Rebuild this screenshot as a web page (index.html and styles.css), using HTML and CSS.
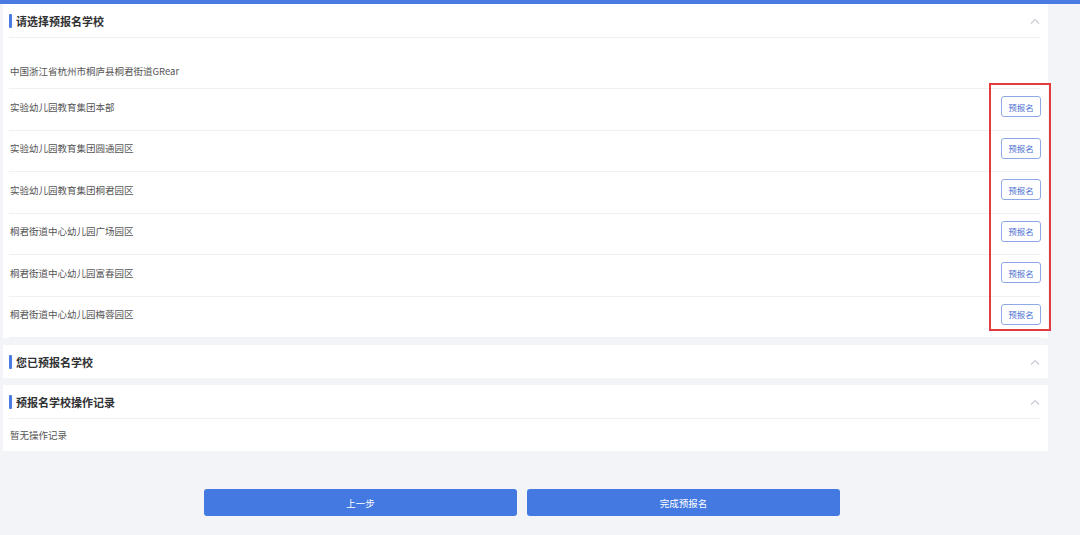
FILE: index.html
```html
<!DOCTYPE html>
<html lang="zh-CN">
<head>
  <meta charset="UTF-8" />
  <meta name="viewport" content="width=device-width, initial-scale=1" />
  <title>预报名</title>
  <link rel="stylesheet" href="styles.css">
</head>
<body>
  <div class="top-bar"></div>

  <div class="page">
    <div class="panel panel-schools">
      <div class="panel-head bordered">
        <h2>请选择预报名学校</h2>
        <svg class="chevron" width="10" height="6" viewBox="0 0 10 6"><polyline points="1,5.5 5,1.5 9,5.5" fill="none" stroke="#c9ccd3" stroke-width="1.2"/></svg>
      </div>

      <div class="address">中国浙江省杭州市桐庐县桐君街道GRear</div>

      <div class="school-row">
        <span>实验幼儿园教育集团本部</span>
        <button class="btn-sign">预报名</button>
      </div>
      <div class="school-row">
        <span>实验幼儿园教育集团圆通园区</span>
        <button class="btn-sign">预报名</button>
      </div>
      <div class="school-row">
        <span>实验幼儿园教育集团桐君园区</span>
        <button class="btn-sign">预报名</button>
      </div>
      <div class="school-row">
        <span>桐君街道中心幼儿园广场园区</span>
        <button class="btn-sign">预报名</button>
      </div>
      <div class="school-row">
        <span>桐君街道中心幼儿园富春园区</span>
        <button class="btn-sign">预报名</button>
      </div>
      <div class="school-row">
        <span>桐君街道中心幼儿园梅蓉园区</span>
        <button class="btn-sign">预报名</button>
      </div>

      <div class="mark-box"></div>
    </div>

    <div class="panel">
      <div class="panel-head">
        <h2>您已预报名学校</h2>
        <svg class="chevron" width="10" height="6" viewBox="0 0 10 6"><polyline points="1,5.5 5,1.5 9,5.5" fill="none" stroke="#c9ccd3" stroke-width="1.2"/></svg>
      </div>
    </div>

    <div class="panel">
      <div class="panel-head bordered">
        <h2>预报名学校操作记录</h2>
        <svg class="chevron" width="10" height="6" viewBox="0 0 10 6"><polyline points="1,5.5 5,1.5 9,5.5" fill="none" stroke="#c9ccd3" stroke-width="1.2"/></svg>
      </div>
      <div class="empty">暂无操作记录</div>
    </div>

    <div class="footer">
      <button class="btn-main">上一步</button>
      <button class="btn-main">完成预报名</button>
    </div>
  </div>
</body>
</html>
```

FILE: styles.css
```css
body {
  margin: 0;
  background-color: #f3f4f8;
  font-family: "Noto Sans CJK SC", "Noto Sans", sans-serif;
  color: #333;
}
.top-bar {
  height: 4px;
  background-color: #4a7be3;
}
.page {
  width: 1045px;
  margin-left: 3px;
}
.panel {
  position: relative;
  background-color: #fff;
  margin-bottom: 7px;
}
.panel-head {
  display: flex;
  align-items: center;
  justify-content: space-between;
  height: 33px;
  margin: 0 7px 0 6px;
}
.panel-head.bordered {
  border-bottom: 1px solid #eef0f4;
}
.panel-head h2 {
  display: flex;
  align-items: center;
  margin: 0;
  font-size: 11px;
  font-weight: 600;
  color: #303133;
}
.panel-head h2::before {
  content: "";
  width: 3px;
  height: 14px;
  margin-right: 4px;
  background-color: #4a7be3;
  border-radius: 1px;
}
.chevron {
  margin-right: 1px;
}
.address {
  margin: 0 7px 0 6px;
  padding: 23px 0 6px 1px;
  line-height: 21px;
  font-size: 9.5px;
  color: #555;
  border-bottom: 1px solid #eef0f4;
}
.school-row {
  display: flex;
  align-items: center;
  justify-content: space-between;
  margin: 0 7px 0 6px;
  padding: 7px 0 12.5px 1px;
  font-size: 9.5px;
  color: #555;
  border-bottom: 1px solid #eef0f4;
}
.school-row:last-of-type {
  border-bottom: none;
  padding-bottom: 13px;
}
.btn-sign {
  width: 40px;
  height: 21px;
  padding: 0;
  background-color: #fff;
  border: 1px solid #8fa9e6;
  border-radius: 3px;
  color: #4a70d2;
  font-family: inherit;
  font-size: 8.5px;
  cursor: pointer;
}
.empty {
  margin: 0 7px 0 6px;
  padding-left: 1px;
  line-height: 32px;
  font-size: 9.5px;
  color: #555;
}
.mark-box {
  position: absolute;
  left: 986px;
  top: 79px;
  width: 58px;
  height: 244px;
  border: 2px solid #e23b3d;
}
.footer {
  display: flex;
  justify-content: center;
  gap: 10px;
  width: 1044px;
  margin-left: -3px;
  padding-top: 31px;
}
.btn-main {
  width: 313px;
  height: 27px;
  background-color: #4479e2;
  border: none;
  border-radius: 3px;
  color: #fff;
  font-family: inherit;
  font-size: 9.5px;
  cursor: pointer;
}
```
